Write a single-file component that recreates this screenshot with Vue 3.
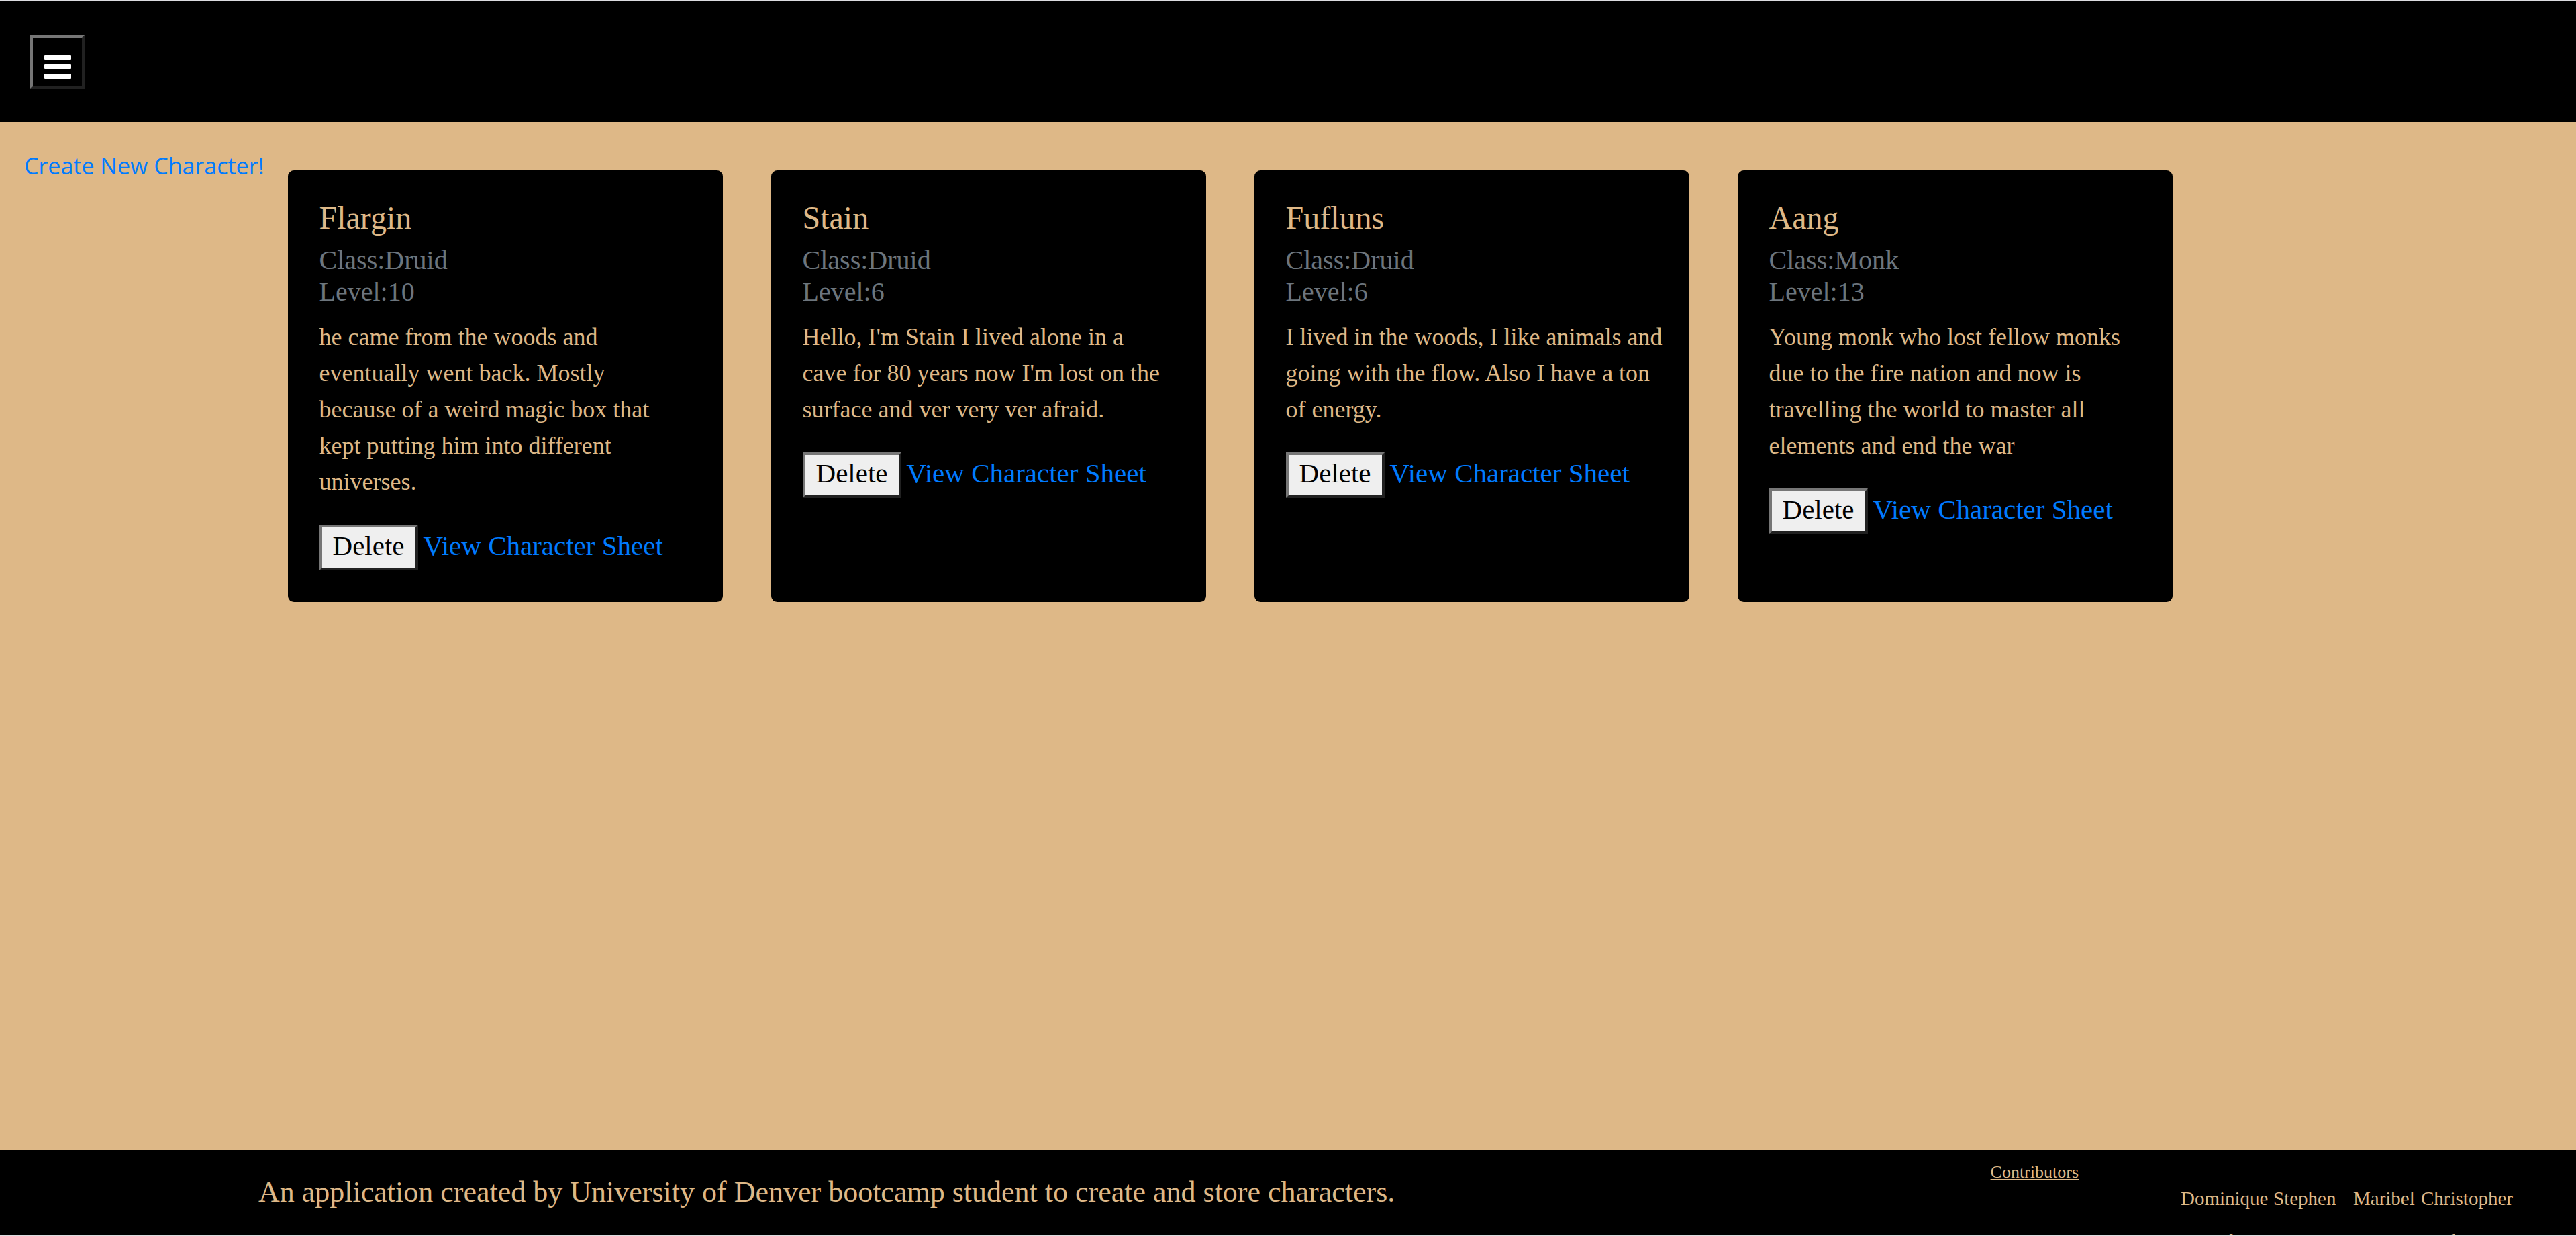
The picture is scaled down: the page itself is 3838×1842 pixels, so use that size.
<script setup>
const characters = [
  { name: 'Flargin', cls: 'Druid', level: 10, story: 'he came from the woods and\neventually went back. Mostly\nbecause of a weird magic box that\nkept putting him into different\nuniverses.' },
  { name: 'Stain', cls: 'Druid', level: 6, story: "Hello, I'm Stain I lived alone in a\ncave for 80 years now I'm lost on the\nsurface and ver very ver afraid." },
  { name: 'Fufluns', cls: 'Druid', level: 6, story: 'I lived in the woods, I like animals and\ngoing with the flow. Also I have a ton\nof energy.' },
  { name: 'Aang', cls: 'Monk', level: 13, story: 'Young monk who lost fellow monks\ndue to the fire nation and now is\ntravelling the world to master all\nelements and end the war' },
]
const contributors = [
  { first: 'Dominique', last: 'Humphrey' },
  { first: 'Stephen', last: 'Rosa' },
  { first: 'Maribel', last: 'Moore' },
  { first: 'Christopher', last: 'Wade' },
]
</script>

<template>
  <div class="page">
    <header class="topbar">
      <button class="menu" type="button" aria-label="Menu">
        <svg viewBox="0 0 40 36" width="40" height="36" fill="#fff" aria-hidden="true">
          <rect y="0" width="40" height="7" rx="1" />
          <rect y="14" width="40" height="7" rx="1" />
          <rect y="28" width="40" height="7" rx="1" />
        </svg>
      </button>
    </header>

    <main class="content">
      <a class="create" href="#">Create New Character!</a>
      <section class="cards">
        <article v-for="c in characters" :key="c.name" class="card">
          <h5 class="name">{{ c.name }}</h5>
          <h6 class="meta">Class:{{ c.cls }}<br />Level:{{ c.level }}</h6>
          <p class="story">{{ c.story }}</p>
          <div class="actions">
            <button class="delete" type="button">Delete</button>
            <a class="sheet" href="#">View Character Sheet</a>
          </div>
        </article>
      </section>
    </main>

    <footer class="footer">
      <p class="about">An application created by University of Denver bootcamp student to create and store characters.</p>
      <h6 class="label">Contributors</h6>
      <ul class="people">
        <li v-for="p in contributors" :key="p.first">{{ p.first }}<br />{{ p.last }}</li>
      </ul>
    </footer>
  </div>
</template>

<style>
body {
  margin: 0;
  background: #deb887;
}
</style>

<style scoped>
.page {
  box-sizing: border-box;
  display: flex;
  flex-direction: column;
  height: 100vh;
  overflow: hidden;
  border-top: 2px solid #dcdce0;
  border-bottom: 1px solid #dcdce0;
  background: #deb887;
  color: #deb887;
  font-family: Papyrus, "Liberation Serif", serif;
}
.topbar {
  display: flex;
  align-items: flex-start;
  box-sizing: border-box;
  height: 180px;
  padding: 50px 45px;
  background: #000;
}
.menu {
  display: flex;
  align-items: flex-end;
  justify-content: center;
  box-sizing: border-box;
  width: 81px;
  height: 80px;
  padding: 0 0 10px;
  border: 4px solid;
  border-color: #767676 #212121 #212121 #767676;
  background: #000;
}
.content {
  display: flex;
  flex: 1;
  align-items: flex-start;
  padding: 36px;
}
.create {
  color: #007bff;
  font: 34px/58px "Open Sans", "Noto Sans", sans-serif;
  text-decoration: none;
  white-space: nowrap;
}
.cards {
  display: flex;
  flex-wrap: wrap;
  gap: 72px;
  padding: 36px 35px 0;
}
.card {
  box-sizing: border-box;
  width: 648px;
  padding: 49px 36px 47px 47px;
  border-radius: 9px;
  background: #000;
}
.name {
  margin: 0;
  font-size: 48px;
  font-weight: 400;
  line-height: 44px;
}
.meta {
  margin: 17px 0;
  color: #6c757d;
  font-size: 40px;
  font-weight: 400;
  line-height: 47px;
}
.story {
  margin: 0 0 37px;
  font-size: 36px;
  line-height: 54px;
  white-space: pre-line;
}
.actions {
  display: flex;
  align-items: center;
  gap: 8px;
}
.delete {
  box-sizing: border-box;
  width: 147px;
  height: 68px;
  padding: 0 0 6px;
  border: 4px solid;
  border-color: #767676 #212121 #212121 #767676;
  background: #efefef;
  color: #000;
  font: inherit;
  font-size: 41px;
}
.sheet {
  padding-bottom: 6px;
  color: #007bff;
  font-size: 41px;
  text-decoration: none;
}
.footer {
  display: flex;
  align-items: flex-start;
  height: 127px;
  padding-left: 385px;
  background: #000;
}
.about {
  flex: 1;
  margin: 36px 0 0;
  font-size: 44px;
  line-height: 54px;
}
.label {
  margin: 18px 0 0;
  font-size: 26px;
  font-weight: 400;
  line-height: 30px;
  text-decoration: underline;
}
.people {
  display: grid;
  grid-template-columns: 138px 119px 101px 151px;
  margin: 41px 80px 0 152px;
  padding: 0;
  font-size: 29px;
  line-height: 63px;
  list-style: none;
}
</style>
